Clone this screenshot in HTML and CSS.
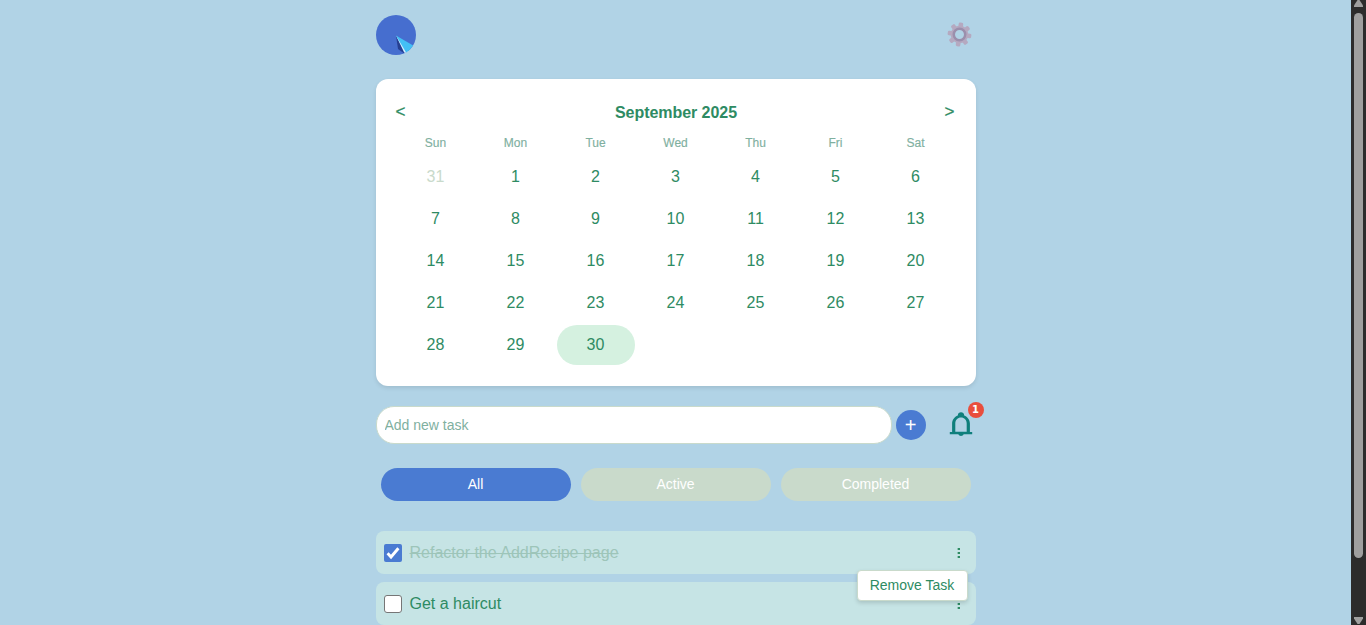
FILE: index.html
```html
<!DOCTYPE html>
<html lang="en">
<head>
<meta charset="utf-8">
<title>Tasks</title>
<link rel="stylesheet" href="styles.css">
</head>
<body>
<div class="page">
  <main class="app">
    <header class="topbar">
      <svg class="logo" viewBox="0 0 40 40">
        <defs><clipPath id="disc"><circle cx="20" cy="20" r="20"/></clipPath></defs>
        <g clip-path="url(#disc)">
          <rect width="40" height="40" fill="#466ecf"/>
          <path d="M20 20.500 22 34 29 39Z" fill="#263f91"/>
          <path d="M20 20.500 28 37 31 40 33 37Z" fill="#d6f1fc"/>
          <path d="M20 20.500 31 39 38 31Z" fill="#43bff5"/>
        </g>
      </svg>
      <svg class="gear" viewBox="0 0 24 24">
        <g transform="rotate(8 12 12)" fill="#b5a9c0">
          <circle cx="12" cy="12" r="8.400"/>
          <rect x="9.800" y="0.600" width="4.400" height="22.800" rx="1.300"/>
          <rect x="9.800" y="0.600" width="4.400" height="22.800" rx="1.300" transform="rotate(45 12 12)"/>
          <rect x="9.800" y="0.600" width="4.400" height="22.800" rx="1.300" transform="rotate(90 12 12)"/>
          <rect x="9.800" y="0.600" width="4.400" height="22.800" rx="1.300" transform="rotate(135 12 12)"/>
        </g>
        <circle cx="12" cy="12" r="5.500" fill="#b1d3e6" stroke="#9b8fac" stroke-width="2.400"/>
      </svg>
    </header>

    <section class="calendar">
      <div class="cal-head"><button class="nav">&lt;</button><h2 class="month">September 2025</h2><button class="nav">&gt;</button></div>
      <div class="weekdays"><span>Sun</span><span>Mon</span><span>Tue</span><span>Wed</span><span>Thu</span><span>Fri</span><span>Sat</span></div>
      <div class="days">
        <span class="day other">31</span><span class="day">1</span><span class="day">2</span><span class="day">3</span><span class="day">4</span><span class="day">5</span><span class="day">6</span>
        <span class="day">7</span><span class="day">8</span><span class="day">9</span><span class="day">10</span><span class="day">11</span><span class="day">12</span><span class="day">13</span>
        <span class="day">14</span><span class="day">15</span><span class="day">16</span><span class="day">17</span><span class="day">18</span><span class="day">19</span><span class="day">20</span>
        <span class="day">21</span><span class="day">22</span><span class="day">23</span><span class="day">24</span><span class="day">25</span><span class="day">26</span><span class="day">27</span>
        <span class="day">28</span><span class="day">29</span><span class="day selected">30</span>
      </div>
    </section>

    <div class="add-row">
      <input class="task-input" type="text" placeholder="Add new task">
      <button class="add">+</button>
      <div class="bell-wrap">
        <svg class="bell" viewBox="0 0 24 26" fill="#0f7f7c">
          <path fill-rule="evenodd" d="M8.800 3.400C8.800 -0.700 15.200 -0.700 15.200 3.400C18.600 4.800 20.900 7.700 20.900 11.500V20H23.200V22.300H14.600C14 24.500 10 24.500 9.400 22.300H0.800V20H3.100V11.500C3.100 7.700 5.400 4.800 8.800 3.400ZM12 5.500C8.700 5.500 6.300 8 6.300 11.500V19.800H17.700V11.500C17.700 8 15.300 5.500 12 5.500Z"/>
        </svg>
        <span class="badge">1</span>
      </div>
    </div>

    <div class="filters"><button class="filter active">All</button><button class="filter">Active</button><button class="filter">Completed</button></div>

    <ul class="tasks">
      <li class="task done">
        <span class="check checked"><svg viewBox="0 0 18 18"><path d="M3.600 9.300 7 13 14.400 4.200" fill="none" stroke="#fff" stroke-width="2.900"/></svg></span>
        <span class="label">Refactor the AddRecipe page</span>
        <span class="dots"><i></i><i></i><i></i></span>
        <div class="menu">Remove Task</div>
      </li>
      <li class="task">
        <span class="check"></span>
        <span class="label">Get a haircut</span>
        <span class="dots"><i></i><i></i><i></i></span>
      </li>
    </ul>
  </main>
  <aside class="scrollbar">
    <svg class="arrow" viewBox="0 0 15 13"><path d="M6.500 0H8.500L12 5.500V7H3V5.500Z" fill="#9f9f9f"/></svg>
    <div class="thumb"></div>
    <svg class="arrow down" viewBox="0 0 15 13"><path d="M3 5H12V6.500L8.500 12H6.500L3 6.500Z" fill="#9f9f9f"/></svg>
  </aside>
</div>
</body>
</html>
```
FILE: styles.css
```css
* { box-sizing: border-box; }
body {
  margin: 0;
  height: 625px;
  overflow: hidden;
  background: #b1d3e6;
  color: #2e8b63;
  font-family: "Liberation Sans", Arial, sans-serif;
}
button { font-family: inherit; border: 0; padding: 0; background: none; color: inherit; }
.page { display: flex; height: 625px; }
.app { width: 600px; margin: 0 auto; padding-top: 15px; }
.topbar { display: flex; justify-content: space-between; height: 40px; margin-bottom: 24px; padding-right: 4px; }
.logo { width: 40px; height: 40px; }
.gear { width: 25px; height: 25px; margin-top: 7px; filter: blur(0.35px); }

.calendar {
  height: 307px;
  padding: 20px;
  background: #fff;
  border-radius: 12px;
  box-shadow: 0 2px 4px rgba(0, 0, 0, 0.1);
}
.cal-head { display: flex; justify-content: space-between; align-items: center; height: 27px; padding: 0 1px 0 0; }
.nav { font-size: 17px; font-weight: 400; line-height: 18px; margin-bottom: 2px; -webkit-text-stroke: 0.3px #2e8b63; }
.month { margin: 0 0 0 2px; font-size: 16px; line-height: 18px; letter-spacing: -0.05px; }
.weekdays { display: grid; grid-template-columns: repeat(7, 80px); height: 30px; padding-top: 10px; font-size: 12px; line-height: 14px; text-align: center; color: #7fb09f; -webkit-text-stroke: 0.15px #7fb09f; }
.days { display: grid; grid-template-columns: repeat(7, 80px); }
.day { height: 40px; margin: 1px; border-radius: 20px; line-height: 39px; text-align: center; font-size: 16px; }
.other { color: #c9dacb; }
.selected { background: #d5f1e0; }

.add-row { display: flex; align-items: center; height: 38px; margin-top: 20px; }
.task-input {
  width: 516px;
  height: 38px;
  padding: 0 8px;
  border: 1px solid #c9dacb;
  border-radius: 18px;
  background: #fff;
  font: 14px "Liberation Sans", Arial, sans-serif;
}
.task-input::placeholder { color: #7fb09f; opacity: 1; }
.add { width: 30px; height: 30px; margin-left: 4px; padding-top: 1px; border-radius: 50%; background: #4a7bd2; color: #fff; font-size: 20px; line-height: 29px; }
.bell-wrap { position: relative; width: 24px; height: 26px; margin-left: 23px; }
.bell { display: block; width: 24px; height: 26px; }
.badge {
  position: absolute;
  top: -10px;
  right: -11px;
  width: 16px;
  height: 16px;
  border-radius: 50%;
  background: #e94e3d;
  color: #fff;
  font: bold 10px/16px "DejaVu Sans", sans-serif;
  text-align: center;
}

.filters { display: grid; grid-template-columns: repeat(3, 190px); gap: 10px; margin: 24px 5px 30px; }
.filter { height: 33px; padding-bottom: 2px; border-radius: 17px; background: #c9dacb; color: #fff; font-size: 14px; }
.filter.active { background: #4a7bd2; }

.tasks { margin: 0; padding: 0; list-style: none; }
.task {
  position: relative;
  display: flex;
  align-items: center;
  height: 43px;
  margin-bottom: 8px;
  padding: 0 15px 0 8px;
  border-radius: 8px;
  background: #c6e4e5;
}
.check { width: 18px; height: 18px; margin-top: 1px; border: 1px solid #767676; border-radius: 3px; background: #fff; }
.checked { border: 0; border-radius: 2px; background: #4a7bd2; }
.checked svg { display: block; }
.label { flex: 1; margin-left: 8px; font-size: 16px; line-height: 18px; }
.done .label { color: #9dc5b9; text-decoration: line-through; }
.dots { display: grid; gap: 2px; width: 4px; margin-top: 1px; justify-items: center; }
.dots i { width: 2px; height: 2px; background: #2e8b63; box-shadow: -1px 0 rgba(46, 139, 99, 0.35); }
.menu {
  position: absolute;
  z-index: 1;
  top: 39px;
  right: 8px;
  width: 111px;
  height: 31px;
  border: 1px solid #c9dacb;
  border-radius: 4px;
  background: #fff;
  box-shadow: 0 2px 4px rgba(0, 0, 0, 0.15);
  font-size: 14px;
  line-height: 29px;
  text-align: center;
}

.scrollbar { display: flex; flex-direction: column; align-items: center; width: 15px; background: #2c2c2c; }
.arrow { width: 15px; height: 13px; }
.thumb { width: 9px; height: 545px; border-radius: 5px; background: #9f9f9f; }
.arrow.down { margin-top: auto; }
```
